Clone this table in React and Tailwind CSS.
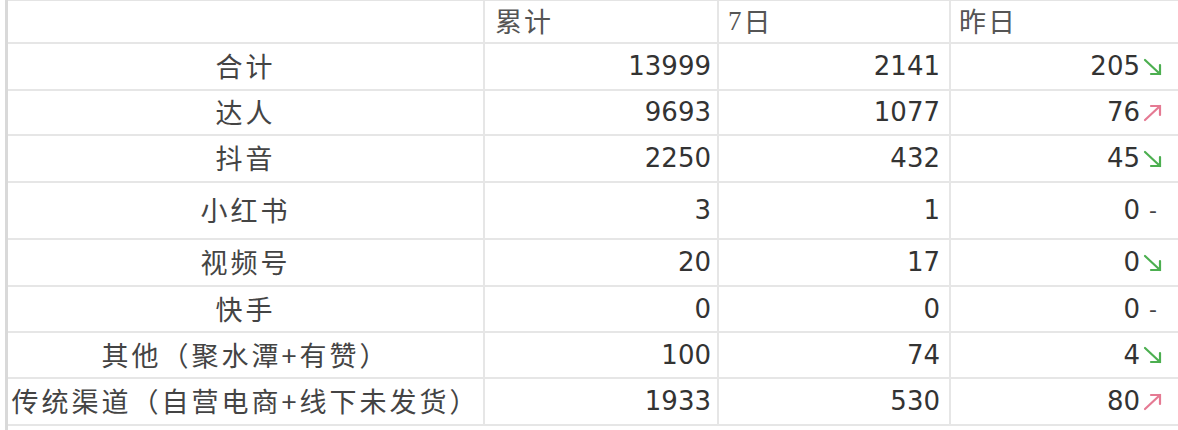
import React from "react";

const rows = [
    { name: "合计", total: 13999, week: 2141, day: 205, trend: "down", h: "h-[47px]" },
    { name: "达人", total: 9693, week: 1077, day: 76, trend: "up", h: "h-[45px]" },
    { name: "抖音", total: 2250, week: 432, day: 45, trend: "down", h: "h-[47px]" },
    { name: "小红书", total: 3, week: 1, day: 0, trend: "flat", h: "h-[57px]" },
    { name: "视频号", total: 20, week: 17, day: 0, trend: "down", h: "h-[47px]" },
    { name: "快手", total: 0, week: 0, day: 0, trend: "flat", h: "h-[46px]" },
    { name: "其他（聚水潭+有赞）", total: 100, week: 74, day: 4, trend: "down", h: "h-[46px]" },
    { name: "传统渠道（自营电商+线下未发货）", total: 1933, week: 530, day: 80, trend: "up", h: "h-[47px]" },
];

function Trend({ trend }) {
    if (trend === "flat")
        return <span className="w-[26px] text-center text-[22px] text-[#444]">-</span>;
    if (trend === "down")
        return (
            <span className="w-[26px] flex justify-center">
                <svg width="20" height="20" viewBox="0 0 20 20" fill="none" stroke="#4caf50" strokeWidth="2.2" strokeLinecap="round">
                    <path d="M2 3 L17 17 M17 8 L17 17 L8 17" />
                </svg>
            </span>
        );
    return (
        <span className="w-[26px] flex justify-center">
            <svg width="20" height="20" viewBox="0 0 20 20" fill="none" stroke="#e57a93" strokeWidth="2.2" strokeLinecap="round">
                <path d="M2 17 L17 3 M8 3 L17 3 L17 12" />
            </svg>
        </span>
    );
}

export default function App() {
    const head = "h-[43px] border-b-2 border-[#e6e6e6] flex items-center text-[27px] tracking-[2px] text-[#555] font-['Noto_Sans_CJK_SC',sans-serif]";
    const cell = "border-b-2 border-[#e6e6e6] flex items-center justify-end text-[26px] text-[#333] font-['DejaVu_Sans',Verdana,sans-serif]";
    return (
        <div className="w-[1178px] h-[430px] bg-white overflow-hidden">
            <div className="ml-[5px] border-l-[3px] border-[#d9d9d9] h-full">
                <div className="grid grid-cols-[477px_234px_232px_227px] border-t border-[#e4e4e4]">
                    <div className={`${head} border-r-2`} />
                    <div className={`${head} border-r-2 pl-[10px]`}>累计</div>
                    <div className={`${head} border-r-2 pl-[9px]`}>
                        <span className="font-['Liberation_Serif',serif]">7</span>日
                    </div>
                    <div className={`${head} pl-[8px]`}>昨日</div>
                    {rows.map((r) => (
                        <React.Fragment key={r.name}>
                            <div className={`${r.h} border-b-2 border-r-2 border-[#e6e6e6] flex items-center justify-center whitespace-nowrap text-[27px] tracking-[3px] text-[#444] font-['Noto_Sans_CJK_SC',sans-serif]`}>
                                {r.name}
                            </div>
                            <div className={`${r.h} ${cell} border-r-2 pr-[6px]`}>{r.total}</div>
                            <div className={`${r.h} ${cell} border-r-2 pr-[9px]`}>{r.week}</div>
                            <div className={`${r.h} ${cell} pr-[12px]`}>
                                <span>{r.day}</span>
                                <Trend trend={r.trend} />
                            </div>
                        </React.Fragment>
                    ))}
                </div>
            </div>
        </div>
    );
}
